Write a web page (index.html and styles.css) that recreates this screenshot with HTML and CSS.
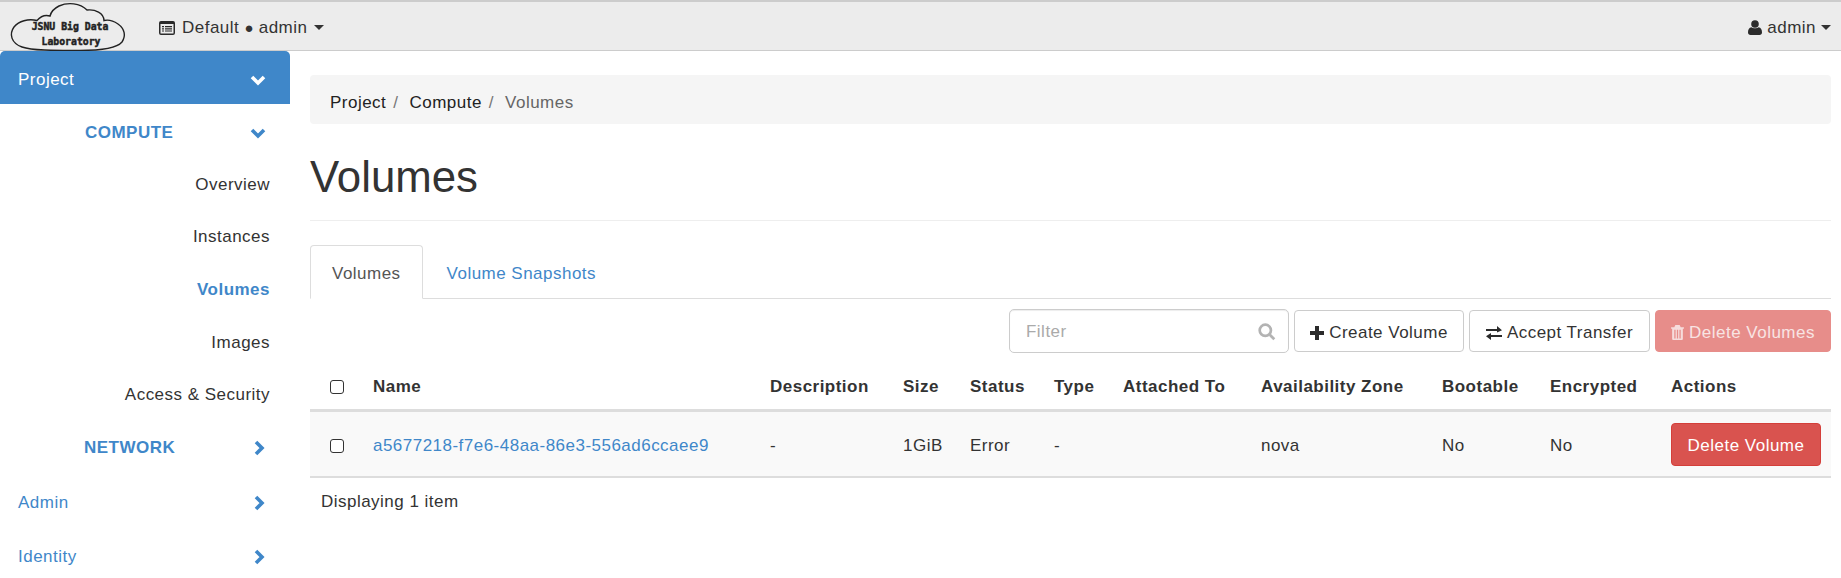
FILE: index.html
```html
<!DOCTYPE html>
<html lang="en">
<head>
<meta charset="utf-8">
<title>Volumes</title>
<link rel="stylesheet" href="styles.css">
</head>
<body>
<header class="navbar">
  <svg class="logo" width="118" height="50" viewBox="0 0 118 50">
    <path class="cloud" d="M29 19.500C20 17.500 11 20 6 26C1 33 3 42 14 46C24 49.500 45 49.500 72 49.500C92 49.500 109 47 114 41C118 35 117 28 110 23C105 19.500 100 18.500 96 19.500C96 12 87 8 79 9C72 2 60 1 51 5C45 8 43 11 42 15C37 13.500 32 16 29 19.500Z"/>
    <text class="logo-text" x="62" y="29">JSNU Big Data</text>
    <text class="logo-text" x="63" y="44">Laboratory</text>
  </svg>
  <div class="nav-menu">
    <svg class="nav-icon" width="16" height="14" viewBox="0 0 16 14"><path class="ink" fill-rule="evenodd" d="M2 0H14A2 2 0 0 1 16 2V12A2 2 0 0 1 14 14H2A2 2 0 0 1 0 12V2A2 2 0 0 1 2 0ZM1.500 3V12A.5.5 0 0 0 2 12.500H14A.5.5 0 0 0 14.500 12V3ZM3 5H5V6.200H3ZM6 5H13V6.200H6ZM3 7.200H5V8.400H3ZM6 7.200H13V8.400H6ZM3 9.400H5V10.600H3ZM6 9.400H13V10.600H6Z"/></svg>
    <span>Default <span class="dot">●</span> admin</span>
    <span class="caret"></span>
  </div>
  <div class="nav-user">
    <svg class="nav-icon" width="14" height="15" viewBox="0 0 14 15"><circle class="ink" cx="7" cy="4" r="3.800"/><path class="ink" d="M0 12.500C0 9.500 1 7.500 3.500 7.200C5 8.600 9 8.600 10.500 7.200C13 7.500 14 9.500 14 12.500C14 14 13 15 11.500 15H2.500C1 15 0 14 0 12.500Z"/></svg>
    <span>admin</span>
    <span class="caret"></span>
  </div>
</header>
<div class="layout">
  <nav class="sidebar">
    <div class="side-row side-project side-open">
      <span>Project</span>
      <svg class="chev" width="16" height="16" viewBox="0 0 16 16"><path class="stroke-white" d="M2 5L8 11L14 5"/></svg>
    </div>
    <div class="side-row side-group side-compute side-open">
      <span class="group-label">COMPUTE</span>
      <svg class="chev" width="16" height="16" viewBox="0 0 16 16"><path class="stroke-blue" d="M2 5L8 11L14 5"/></svg>
    </div>
    <a class="side-item">Overview</a>
    <a class="side-item">Instances</a>
    <a class="side-item side-active side-tall">Volumes</a>
    <a class="side-item side-tall">Images</a>
    <a class="side-item">Access &amp; Security</a>
    <div class="side-row side-group side-network">
      <span class="group-label">NETWORK</span>
      <svg class="chev" width="16" height="16" viewBox="0 0 16 16"><path class="stroke-blue" d="M5 2L11 8L5 14"/></svg>
    </div>
    <div class="side-row side-top">
      <span>Admin</span>
      <svg class="chev" width="16" height="16" viewBox="0 0 16 16"><path class="stroke-blue" d="M5 2L11 8L5 14"/></svg>
    </div>
    <div class="side-row side-top">
      <span>Identity</span>
      <svg class="chev" width="16" height="16" viewBox="0 0 16 16"><path class="stroke-blue" d="M5 2L11 8L5 14"/></svg>
    </div>
  </nav>
  <main class="content">
    <ol class="breadcrumb">
      <li>Project<span class="sep">/</span></li>
      <li>Compute<span class="sep">/</span></li>
      <li class="crumb-current">Volumes</li>
    </ol>
    <h1 class="page-title">Volumes</h1>
    <ul class="tabs">
      <li class="tab tab-active">Volumes</li>
      <li class="tab">Volume Snapshots</li>
    </ul>
    <div class="toolbar">
      <div class="filter">
        <span class="filter-text">Filter</span>
        <svg width="18" height="18" viewBox="0 0 16 16"><circle class="search" cx="6.500" cy="6.500" r="5"/><path class="search" d="M10.500 10.500L14.500 14.500"/></svg>
      </div>
      <button class="btn btn-create" type="button">
        <svg width="14" height="14" viewBox="0 0 14 14"><path class="ink" d="M5 0H9V5H14V9H9V14H5V9H0V5H5Z"/></svg>
        Create Volume
      </button>
      <button class="btn btn-accept" type="button">
        <svg width="16" height="14" viewBox="0 0 16 14"><path class="ink" d="M0 3H11V0L16 4.200L11 6.500V5H0ZM16 9H5V7L0 10.200L5 14V11H16Z"/></svg>
        Accept Transfer
      </button>
      <button class="btn btn-bulk" type="button">
        <svg width="13" height="15" viewBox="0 0 12 14"><path class="pale" fill-rule="evenodd" d="M4 0H8L9 2H12V3.500H11V13A1 1 0 0 1 10 14H2A1 1 0 0 1 1 13V3.500H0V2H3ZM3 4.500V12.500H4.200V4.500ZM5.400 4.500V12.500H6.600V4.500ZM7.800 4.500V12.500H9V4.500Z"/></svg>
        Delete Volumes
      </button>
    </div>
    <table class="volumes">
      <colgroup>
        <col class="c-check"><col class="c-name"><col class="c-desc"><col class="c-size"><col class="c-status"><col class="c-type"><col class="c-att"><col class="c-az"><col class="c-boot"><col class="c-enc"><col class="c-act">
      </colgroup>
      <thead>
        <tr>
          <th><span class="check"></span></th>
          <th>Name</th><th>Description</th><th>Size</th><th>Status</th><th>Type</th><th>Attached To</th><th>Availability Zone</th><th>Bootable</th><th>Encrypted</th><th>Actions</th>
        </tr>
      </thead>
      <tbody>
        <tr>
          <td><span class="check"></span></td>
          <td><a class="vol-link">a5677218-f7e6-48aa-86e3-556ad6ccaee9</a></td>
          <td>-</td><td>1GiB</td><td>Error</td><td>-</td><td></td><td>nova</td><td>No</td><td>No</td>
          <td><button class="btn btn-danger" type="button">Delete Volume</button></td>
        </tr>
      </tbody>
    </table>
    <p class="count">Displaying 1 item</p>
  </main>
</div>
</body>
</html>
```

FILE: styles.css
```css
* { box-sizing: border-box; }
html, body { margin: 0; height: 578px; overflow: hidden; }
body { font-family: "Liberation Sans", Arial, sans-serif; font-size: 17px; letter-spacing: .48px; color: #333; background: #fff; }

.ink { fill: #2b2b2b; }
.pale { fill: #f6dcdc; }
.stroke-white, .stroke-blue { fill: none; stroke-width: 3.600; }
.stroke-white { stroke: #fff; }
.stroke-blue { stroke: #3f87c9; }

.navbar { height: 51px; display: flex; align-items: center; background: #ececec; border-top: 2px solid #ccc; border-bottom: 1px solid #ccc; padding: 0 10px 0 8px; }
.logo { flex: none; overflow: visible; margin-top: -1px; }
.cloud { fill: none; stroke: #222; stroke-width: 1.400; }
.logo-text { font-family: "DejaVu Sans Mono", monospace; font-weight: 700; font-size: 9.800px; letter-spacing: 0; text-anchor: middle; fill: #222; stroke: #222; stroke-width: .45px; }
.nav-menu { display: flex; align-items: center; gap: 7px; margin-left: 33px; padding-top: 3px; color: #333; }
.nav-user { display: flex; align-items: center; gap: 5px; margin-left: auto; padding-top: 3px; }
.dot { font-size: 15px; letter-spacing: 0; }
.caret { width: 0; height: 0; border-left: 5.500px solid transparent; border-right: 5.500px solid transparent; border-top: 5.500px solid #333; }

.layout { display: grid; grid-template-columns: 290px 1fr; height: 527px; }
.sidebar { display: flex; flex-direction: column; align-items: stretch; }
.side-row { display: flex; align-items: center; justify-content: space-between; padding: 0 23px 0 18px; }
.side-open { padding-right: 24px; }
.side-project { height: 53px; background: #3f87c9; color: #fff; border-radius: 5px 5px 0 0; padding-top: 5px; }
.side-group { height: 53px; color: #3f87c9; font-weight: 700; padding-left: 84px; }
.side-compute { margin-top: 2px; padding-left: 85px; }
.side-network { margin-bottom: 2px; }
.side-item { height: 52px; display: flex; align-items: center; justify-content: flex-end; padding-right: 20px; color: #333; }
.side-tall { height: 53px; }
.side-active { color: #3f87c9; font-weight: 700; }
.side-top { height: 54px; color: #3f87c9; }

.content { padding: 24px 10px 0 20px; min-width: 0; }
.breadcrumb { display: flex; list-style: none; margin: 0; padding: 6px 20px 0; height: 49px; align-items: center; background: #f5f5f5; border-radius: 4px; color: #222; }
.sep { color: #777; padding: 0 11px 0 7px; }
.crumb-current { color: #666; }
.page-title { margin: 0; height: 97px; font-size: 43.800px; font-weight: 400; letter-spacing: 0; line-height: 105px; border-bottom: 1px solid #eee; color: #333; }

.tabs { display: flex; gap: 2px; list-style: none; margin: 24px 0 0; padding: 0; height: 54px; border-bottom: 1px solid #ddd; }
.tab { padding: 0 21px; height: 54px; line-height: 56px; color: #3f87c9; border: 1px solid transparent; border-radius: 4px 4px 0 0; }
.tab-active { color: #555; background: #fff; border-color: #ddd; border-bottom-color: #fff; }

.toolbar { display: flex; justify-content: flex-end; align-items: center; gap: 5px; margin-top: 10px; height: 44px; }
.filter { width: 280px; height: 44px; display: flex; align-items: center; justify-content: space-between; padding: 2px 12px 0 16px; border: 1px solid #ccc; border-radius: 5px; box-shadow: inset 0 1px 1px rgba(0,0,0,.075); }
.filter-text { color: #aaa; }
.search { fill: none; stroke: #b3b3b3; stroke-width: 2.400; }
.btn { font: inherit; letter-spacing: inherit; display: inline-flex; align-items: center; justify-content: center; gap: 5px; height: 42px; border-radius: 4px; border: 1px solid #ccc; background: #fff; color: #333; padding: 3px 0 0; }
.btn-create { width: 170px; }
.btn-accept { width: 181px; }
.btn-bulk { width: 176px; background: #e78d8a; border-color: #e78d8a; color: #f8e4e3; }
.btn-danger { width: 150px; height: 43px; background: #d9534f; border-color: #d43f3a; color: #fff; }

.volumes { width: 100%; table-layout: fixed; border-collapse: collapse; margin-top: 11px; }
.volumes th { height: 46px; text-align: left; padding: 2px 0 0 8px; font-weight: 700; border-bottom: 3px solid #ddd; }
.volumes td { height: 67px; padding: 5px 0 0 8px; background: #f9f9f9; border-bottom: 2px solid #ddd; }
.volumes th:first-child, .volumes td:first-child { padding-left: 20px; }
.volumes td:last-child { padding-top: 2px; }
.c-check { width: 55px; }
.c-name { width: 397px; }
.c-desc { width: 133px; }
.c-size { width: 67px; }
.c-status { width: 84px; }
.c-type { width: 69px; }
.c-att { width: 138px; }
.c-az { width: 181px; }
.c-boot { width: 108px; }
.c-enc { width: 121px; }
.check { display: block; width: 14px; height: 14px; border: 1.500px solid #333; border-radius: 3px; background: #fff; }
.vol-link { color: #3f87c9; }
.count { margin: 14px 0 0 11px; color: #333; }
```
